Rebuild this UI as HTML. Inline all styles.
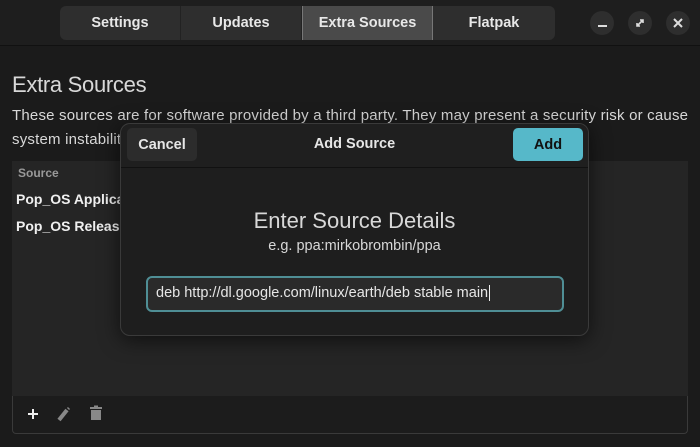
<!DOCTYPE html>
<html><head><style>
*{box-sizing:border-box;margin:0;padding:0}
body{width:700px;height:447px;background:#1b1b1b;font-family:"Liberation Sans","DejaVu Sans",sans-serif;color:#ddd;position:relative;overflow:hidden}
.hdr{position:absolute;left:0;top:0;width:700px;height:46px;background:#1e1e1e;border-bottom:1px solid #111}
.tabs{position:absolute;left:60px;top:6px;height:34px;width:495px;background:#2e2e2e;border-radius:6px;display:flex;overflow:hidden}
.tab{height:34px;display:flex;align-items:center;justify-content:center;font-weight:bold;font-size:14.5px;color:#e8e8e8;border-right:1px solid #222}
.tab.act{background:#4a4a4a;border-left:1px solid #777;border-right:1px solid #777}
.wb{position:absolute;top:11px;width:24px;height:24px;border-radius:50%;background:#2e2e2e;color:#ddd;font-size:13px;font-weight:bold;display:flex;align-items:center;justify-content:center}
h1{position:absolute;left:12px;top:72px;font-size:22px;font-weight:normal;color:#d8d8d8;letter-spacing:-0.3px}
p{position:absolute;left:12px;top:104px;width:690px;font-size:15px;line-height:24px;color:#d8d8d8;white-space:nowrap;letter-spacing:0.2px}
.list{position:absolute;left:12px;top:161px;width:676px;height:235px;background:#252525}
.tb{position:absolute;left:12px;top:396px;width:676px;height:38px;border:1px solid #3a3a3a;border-top:none;border-radius:0 0 4px 4px;background:#1c1c1c}
.lt{position:absolute;left:17px;font-weight:bold;color:#f0f0f0;font-size:14px}
.dlg{position:absolute;left:120px;top:123px;width:469px;height:213px;background:#1e1e1e;border:1px solid #3a3a3a;border-radius:10px;box-shadow:0 4px 20px rgba(0,0,0,.6)}
.dh{position:absolute;left:0;top:0;width:100%;height:44px;border-bottom:1px solid #111;background:#1f1f1f;border-radius:10px 10px 0 0}
.btn{position:absolute;top:4px;height:33px;border-radius:5px;font-weight:bold;font-size:14.5px;display:flex;align-items:center;justify-content:center}
.entry{position:absolute;left:25px;top:152px;width:418px;height:36px;border:2px solid #4f8e95;border-radius:6px;background:#2a2a2a;font-size:14.5px;color:#e6e6e6;padding:7px 0 0 8px}
</style></head><body>
<div class="hdr">
<div class="tabs"><div class="tab" style="width:121px">Settings</div><div class="tab" style="width:121px">Updates</div><div class="tab act" style="width:131px">Extra Sources</div><div class="tab" style="width:122px;border:none">Flatpak</div></div>
<div class="wb" style="left:590px"><div style="width:9px;height:2.5px;background:#ddd;margin-top:6px"></div></div>
<div class="wb" style="left:628px"><svg width="12" height="12" viewBox="0 0 12 12"><path d="M3 9L9 3M6 3H9V6M3 6V9H6" stroke="#ddd" stroke-width="1.6" fill="none"/></svg></div>
<div class="wb" style="left:666px"><svg width="10" height="10" viewBox="0 0 10 10"><path d="M1 1L9 9M9 1L1 9" stroke="#ddd" stroke-width="2"/></svg></div>
</div>
<h1>Extra Sources</h1>
<p>These sources are for software provided by a third party. They may present a security risk or cause<br>system instability.</p>
<div class="list">
<div style="position:absolute;left:6px;top:5px;font-size:12px;font-weight:bold;color:#999">Source</div>
<div class="lt" style="left:4px;top:30px">Pop_OS Applications</div>
<div class="lt" style="left:4px;top:57px">Pop_OS Release</div>
</div>
<div class="tb">
<svg style="position:absolute;left:14px;top:12px" width="12" height="12"><path d="M6 1V11M1 6H11" stroke="#eee" stroke-width="2"/></svg>
<svg style="position:absolute;left:43px;top:10px" width="16" height="16"><path d="M3 14L11 4" stroke="#888" stroke-width="4"/><path d="M12 3L13 2" stroke="#888" stroke-width="3"/></svg>
<svg style="position:absolute;left:75px;top:9px" width="16" height="16"><rect x="2" y="2" width="12" height="2" fill="#888"/><rect x="6" y="0.5" width="4" height="2" fill="#888"/><rect x="3" y="5" width="10" height="10" fill="#888"/></svg>
</div>
<div class="dlg">
<div class="dh">
<div class="btn" style="left:6px;width:70px;background:#2c2c2c;color:#e6e6e6">Cancel</div>
<div style="position:absolute;left:0;width:100%;top:12px;text-align:center;font-weight:bold;font-size:14.5px;color:#e6e6e6">Add Source</div>
<div class="btn" style="left:392px;width:70px;background:#56b8c9;color:#111">Add</div>
</div>
<div style="position:absolute;top:84px;width:100%;text-align:center;font-size:22px;color:#d8d8d8">Enter Source Details</div>
<div style="position:absolute;top:114px;width:100%;text-align:center;font-size:14.5px;color:#d8d8d8">e.g. ppa:mirkobrombin/ppa</div>
<div class="entry">deb http://dl.google.com/linux/earth/deb stable main<span style="border-left:1px solid #eee;margin-left:1px"></span></div>
</div>
</body></html>
